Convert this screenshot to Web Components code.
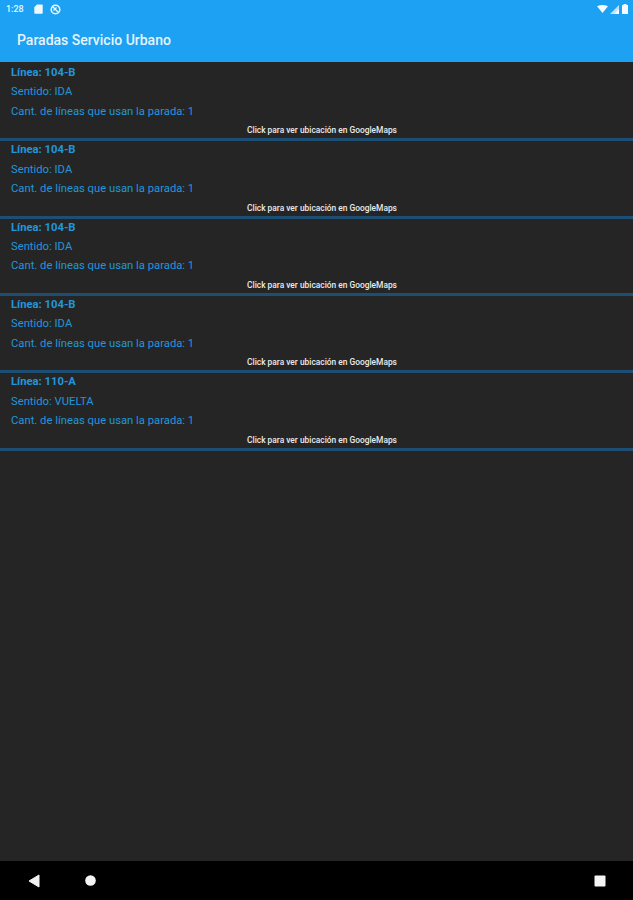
<!DOCTYPE html>
<html><head><meta charset="utf-8">
<style>
html,body{margin:0;height:100%;background:#252525}
body{width:633px;height:900px;overflow:hidden;font-family:Roboto,"Liberation Sans",sans-serif}
</style></head><body>
<app-screen>
<status-bar slot="status"></status-bar>
<app-bar slot="bar">Paradas Servicio Urbano</app-bar>
<stop-row linea="Línea: 104-B" sentido="Sentido: IDA"></stop-row>
<stop-row linea="Línea: 104-B" sentido="Sentido: IDA"></stop-row>
<stop-row linea="Línea: 104-B" sentido="Sentido: IDA"></stop-row>
<stop-row linea="Línea: 104-B" sentido="Sentido: IDA"></stop-row>
<stop-row linea="Línea: 110-A" sentido="Sentido: VUELTA"></stop-row>
<nav-bar slot="nav"></nav-bar>
</app-screen>
<script>
function def(name,html,init){customElements.define(name,class extends HTMLElement{
 constructor(){super();this.attachShadow({mode:'open'}).innerHTML=html;}
 connectedCallback(){if(init)init(this);}
});}
def('app-screen',`<style>:host{display:flex;flex-direction:column;width:633px;height:900px;background:#252525}
main{flex:1;min-height:0;padding-top:2px}</style>
<slot name="status"></slot><slot name="bar"></slot><main><slot></slot></main><slot name="nav"></slot>`);
def('status-bar',`<style>:host{display:flex;align-items:center;height:18px;background:#1da1f2;color:#e8f5fe;padding:0 5px 0 6px;font:500 9px Roboto,sans-serif;box-sizing:border-box}
.l{display:flex;align-items:center;gap:10px}.s{flex:1}.r{display:flex;align-items:center;gap:2px}svg{display:block}</style>
<div class="l"><span>1:28</span>
<svg width="9" height="10" viewBox="0 0 9 10"><path d="M3 .5H8a.7.7 0 0 1 .7.7v7.900a.7.7 0 0 1-.7.7H1a.7.7 0 0 1-.7-.7V3.200z" fill="#f0f8fe"/></svg>
<svg width="11" height="11" viewBox="0 0 11 11" style="margin-left:-3px"><circle cx="5.500" cy="5.500" r="4.300" fill="none" stroke="#f0f8fe" stroke-width="1.500"/><path d="M2.500 2.500l6 6M3.500 6.500l3-3" stroke="#f0f8fe" stroke-width="1.300"/></svg></div>
<div class="s"></div>
<div class="r">
<svg width="11" height="8" viewBox="0 0 11 8"><path d="M0 1.200Q5.500-1.200 11 1.200L5.500 8z" fill="#f4faff"/></svg>
<svg width="9" height="9" viewBox="0 0 9 9"><path d="M0 9 9 0v9z" fill="#bfe3fb"/><path d="M4 9 9 4v5z" fill="#f4faff"/></svg>
<svg width="6" height="10" viewBox="0 0 6 10" style="margin-left:1px"><path d="M1.500 0h3v1H6v9H0V1h1.500z" fill="#f4faff"/></svg></div>`);
def('app-bar',`<style>:host{display:flex;align-items:center;height:44px;background:#1da1f2;color:#e6f4fe;padding:0 0 0 17px;box-sizing:border-box;font:500 14px Roboto,sans-serif}</style><slot></slot>`);
def('stop-row',`<style>:host{display:flex;flex-direction:column;height:77.35px;box-sizing:border-box;border-bottom:3px solid #1d4f75;padding-left:11px;color:#2196dc;font:400 11.25px/19.4px Roboto,sans-serif}
div{height:19.4px;white-space:nowrap;flex:none}.a{font-weight:700;margin-top:-1px}.c{color:#ececec;font:500 8.4px/17.500px Roboto,sans-serif;text-align:center;height:15.500px;margin-top:1px}</style>
<div class="a" id="a"></div><div id="b"></div><div>Cant. de líneas que usan la parada: 1</div><div class="c">Click para ver ubicación en GoogleMaps</div>`,
e=>{e.shadowRoot.getElementById('a').textContent=e.getAttribute('linea');e.shadowRoot.getElementById('b').textContent=e.getAttribute('sentido');});
def('nav-bar',`<style>:host{display:block;position:relative;height:39px;background:#000}
svg{position:absolute;display:block}</style>
<svg style="left:28px;top:13px" width="12" height="14" viewBox="0 0 12 14"><path d="M11 1v12L1 7z" fill="#f2f2f2" stroke="#f2f2f2" stroke-linejoin="round"/></svg>
<svg style="left:85px;top:14px" width="11" height="11" viewBox="0 0 11 11"><circle cx="5.500" cy="5.500" r="5.300" fill="#f5f5f5"/></svg>
<svg style="left:594px;top:14px" width="12" height="12" viewBox="0 0 12 12"><rect x=".5" y=".5" width="11" height="11" rx="1" fill="#f5f5f5"/></svg>`);
</script>
</body></html>
